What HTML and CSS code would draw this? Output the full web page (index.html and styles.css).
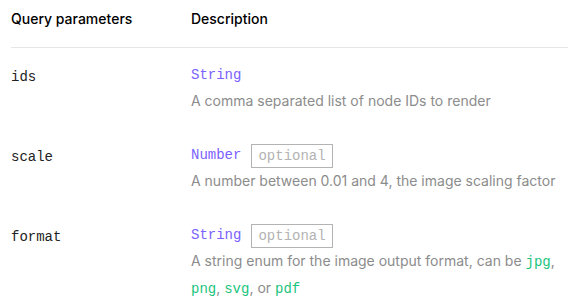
FILE: index.html
```html
<!DOCTYPE html>
<html lang="en">
<head>
    <meta charset="UTF-8">
    <title>Query parameters</title>
    <link rel="stylesheet" href="styles.css">
</head>
<body>
    <div class="params">
        <div class="row head">
            <div class="name">Query parameters</div>
            <div class="desc">Description</div>
        </div>

        <div class="row">
            <div class="name"><code>ids</code></div>
            <div class="desc">
                <div class="type"><code class="kind">String</code></div>
                <p>A comma separated list of node IDs to render</p>
            </div>
        </div>

        <div class="row">
            <div class="name"><code>scale</code></div>
            <div class="desc">
                <div class="type"><code class="kind">Number</code><span class="optional">optional</span></div>
                <p>A number between 0.01 and 4, the image scaling factor</p>
            </div>
        </div>

        <div class="row">
            <div class="name"><code>format</code></div>
            <div class="desc">
                <div class="type"><code class="kind">String</code><span class="optional">optional</span></div>
                <p>A string enum for the image output format, can be <code class="val">jpg</code>, <code class="val">png</code>, <code class="val">svg</code>, or <code class="val">pdf</code></p>
            </div>
        </div>
    </div>
</body>
</html>
```

FILE: styles.css
```css
body {
    margin: 0;
    background-color: #fff;
    font-family: Inter, "Liberation Sans", sans-serif;
    font-size: 14px;
    color: #000;
}
.params {
    padding: 0 0 0 11px;
}
.row {
    display: flex;
    line-height: 25px;
    padding-bottom: 30px;
}
.row:last-child {
    padding-bottom: 0;
}
.row.head {
    font-weight: 500;
    padding: 6px 0 16px;
    margin-bottom: 15px;
    border-bottom: 1px solid #e6e6e6;
}
.name {
    width: 180px;
    flex-shrink: 0;
}
.name code {
    color: #222;
}
.desc {
    flex: 1;
}
.desc p {
    margin: 0;
    color: #8c8c8c;
}
code {
    font-family: "Liberation Mono", monospace;
    font-size: 14px;
}
.type {
    display: flex;
    align-items: center;
}
.kind {
    color: #7b61ff;
}
.optional {
    font-family: "Liberation Mono", monospace;
    color: #b3b3b3;
    border: 1px solid #b3b3b3;
    line-height: 22px;
    padding: 0 6px;
    margin-left: 10px;
}
.val {
    color: #1bc47d;
}
```
